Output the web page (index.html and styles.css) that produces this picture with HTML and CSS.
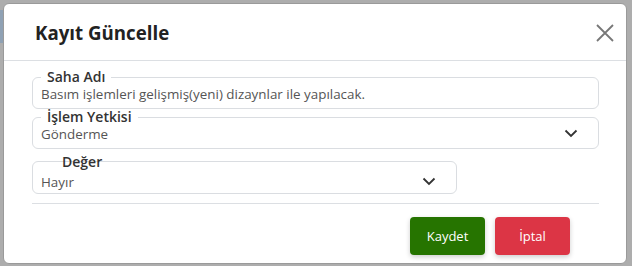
FILE: index.html
```html
<!DOCTYPE html>
<html lang="tr">
<head>
  <meta charset="UTF-8">
  <title>Kayıt Güncelle</title>
  <link rel="stylesheet" href="styles.css">
</head>
<body>
  <div class="backdrop-strip"></div>
  <div class="modal">
    <div class="modal-header">
      <h2 class="modal-title">Kayıt Güncelle</h2>
      <button class="close-btn" aria-label="Kapat">
        <svg width="18" height="18" viewBox="0 0 18 18">
          <path d="M1 1 L17 17 M17 1 L1 17" stroke="#777" stroke-width="1.8" fill="none"/>
        </svg>
      </button>
    </div>
    <div class="modal-body">
      <fieldset class="field">
        <legend>Saha Adı</legend>
        <div class="field-value">Basım işlemleri gelişmiş(yeni) dizaynlar ile yapılacak.</div>
      </fieldset>
      <fieldset class="field">
        <legend>İşlem Yetkisi</legend>
        <div class="field-value select">
          <span>Gönderme</span>
          <svg class="chevron" width="14" height="9" viewBox="0 0 14 9">
            <path d="M1.5 1.5 L7 7 L12.5 1.5" stroke="#333" stroke-width="1.8" fill="none"/>
          </svg>
        </div>
      </fieldset>
      <div class="field small">
        <span class="float-label">Değer</span>
        <div class="field-value select">
          <span>Hayır</span>
          <svg class="chevron" width="14" height="9" viewBox="0 0 14 9">
            <path d="M1.5 1.5 L7 7 L12.5 1.5" stroke="#333" stroke-width="1.8" fill="none"/>
          </svg>
        </div>
      </div>
    </div>
    <div class="modal-footer">
      <button class="btn btn-save">Kaydet</button>
      <button class="btn btn-cancel">İptal</button>
    </div>
  </div>
</body>
</html>
```

FILE: styles.css
```css
body {
  margin: 0;
  background-color: #adadad;
  font-family: 'Open Sans', 'Noto Sans', sans-serif;
  width: 632px;
  height: 266px;
  overflow: hidden;
  position: relative;
}

.backdrop-strip {
  position: absolute;
  left: 0;
  top: 10px;
  width: 4px;
  height: 33px;
  background: #8fa1b4;
}

.modal {
  position: relative;
  margin: 3px 0 0 3px;
  width: 622px;
  height: 259px;
  background: #fff;
  border: 1px solid #9a9a9a;
  border-radius: 6px;
  box-sizing: content-box;
}

.modal-header {
  display: flex;
  align-items: center;
  justify-content: space-between;
  height: 56px;
  padding: 0 12px 0 31px;
  border-bottom: 1px solid #dcdfe3;
}

.modal-title {
  margin: 0;
  font-size: 18.7px;
  font-weight: 700;
  color: #222;
}

.close-btn {
  border: none;
  background: none;
  padding: 0;
  width: 18px;
  height: 18px;
  cursor: pointer;
  margin-top: 2px;
}

.modal-body {
  padding: 10px 27px 0 28px;
  display: flex;
  flex-direction: column;
}

.field {
  position: relative;
  margin: 0;
  border: 1px solid #dadde1;
  border-radius: 6px;
  padding: 0 8px 5px 8px;
  min-width: 0;
}

.field + .field {
  margin-top: 2px;
}

.field legend {
  margin-left: 0;
  padding: 0 6px;
  font-size: 14px;
  font-weight: 600;
  color: #333;
  line-height: 12px;
}

.field-value {
  font-size: 13.4px;
  color: #555;
  line-height: 17px;
  padding-top: 3px;
}

.select {
  display: flex;
  align-items: center;
  justify-content: space-between;
  padding-right: 12px;
}

.chevron {
  margin-top: -2px;
}

.field.small {
  width: 407px;
  margin-top: 12px;
  padding-top: 9px;
  padding-bottom: 2px;
}

.float-label {
  position: absolute;
  left: 29px;
  top: -8px;
  font-size: 14px;
  font-weight: 600;
  color: #333;
  line-height: 15px;
}

.modal-footer {
  margin: 9px 27px 0 28px;
  border-top: 1px solid #dcdfe3;
  padding: 13px 29px 0 0;
  display: flex;
  justify-content: flex-end;
  gap: 10px;
}

.btn {
  width: 75px;
  height: 38px;
  border: none;
  border-radius: 4px;
  color: white;
  font-family: 'Open Sans', 'Noto Sans', sans-serif;
  font-size: 13px;
  font-weight: 500;
  box-shadow: 0 2px 5px rgba(0, 0, 0, 0.2);
  cursor: pointer;
}

.btn-save {
  background-color: #267400;
}

.btn-cancel {
  background-color: #dc3545;
}
```
